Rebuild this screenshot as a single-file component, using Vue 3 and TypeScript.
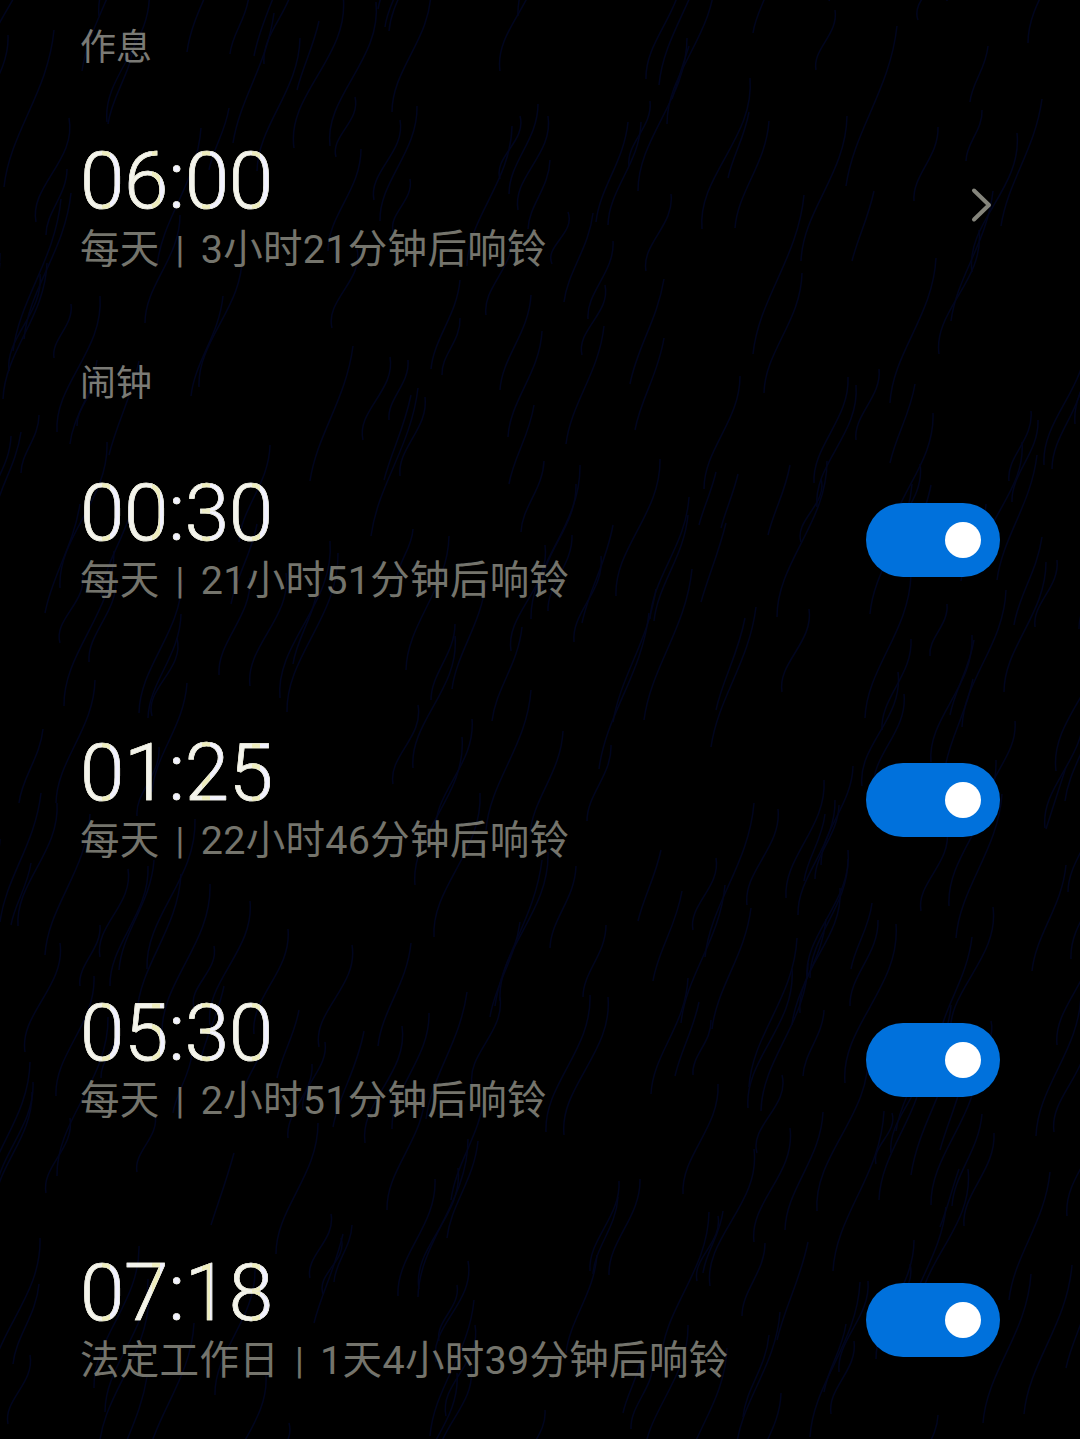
<script setup lang="ts">
interface Alarm { time: string; repeat: string; remain: string }

const alarms: Alarm[] = [
  { time: '00:30', repeat: '每天', remain: '21小时51分钟后响铃' },
  { time: '01:25', repeat: '每天', remain: '22小时46分钟后响铃' },
  { time: '05:30', repeat: '每天', remain: '2小时51分钟后响铃' },
  { time: '07:18', repeat: '法定工作日', remain: '1天4小时39分钟后响铃' },
]

let seed = 23
const rnd = (): number => {
  seed = (seed * 16807) % 2147483647
  return seed / 2147483647
}
const streaks: string[] = Array.from({ length: 420 }, () => {
  const x = rnd() * 1300 - 100
  const y = rnd() * 1500
  const len = 50 + rnd() * 110
  const dx = len * 0.32
  const w = (rnd() - 0.5) * 16
  return `M${x.toFixed(0)} ${y.toFixed(0)}c${w.toFixed(0)} ${(-len * 0.35).toFixed(0)} ${(dx - w).toFixed(0)} ${(-len * 0.6).toFixed(0)} ${dx.toFixed(0)} ${(-len).toFixed(0)}`
})
</script>

<template>
  <main class="page">
    <svg class="streaks" viewBox="0 0 1080 1439" aria-hidden="true">
      <path v-for="(d, i) in streaks" :key="i" :d="d" />
    </svg>

    <h2 class="label">作息</h2>
    <section class="row bedtime">
      <div class="text">
        <div class="time">06:00</div>
        <div class="sub"><span>每天</span><i class="sep">|</i><span>3小时21分钟后响铃</span></div>
      </div>
      <svg class="chevron" width="24" height="36" viewBox="0 0 24 36" aria-hidden="true">
        <path d="M4 3.5 L19 18 L4 32.5" />
      </svg>
    </section>

    <h2 class="label">闹钟</h2>
    <section v-for="a in alarms" :key="a.time" class="row">
      <div class="text">
        <div class="time">{{ a.time }}</div>
        <div class="sub"><span>{{ a.repeat }}</span><i class="sep">|</i><span>{{ a.remain }}</span></div>
      </div>
      <div class="toggle"><span class="knob"></span></div>
    </section>
  </main>
</template>

<style scoped>
.page {
  position: relative;
  width: 1080px;
  height: 1439px;
  overflow: hidden;
  background: #000;
  padding: 0 80px;
  box-sizing: border-box;
  font-family: Roboto, "Noto Sans CJK SC", sans-serif;
}
.streaks {
  position: absolute;
  inset: 0;
  width: 1080px;
  height: 1439px;
}
.streaks path {
  fill: none;
  stroke: #00051e;
  stroke-width: 1.5;
}
.label {
  position: relative;
  margin: 0;
  padding-top: 19px;
  font-size: 36px;
  line-height: 58px;
  height: 55px;
  font-weight: 400;
  color: #7a7a75;
}
.row {
  position: relative;
  height: 260px;
  display: flex;
  align-items: center;
  justify-content: space-between;
}
.row > .text {
  margin-top: -2px;
}
.row.bedtime {
  height: 262px;
  padding-right: 6px;
}
.row.bedtime > .text {
  padding-top: 5px;
  margin-top: 0;
}
.row.bedtime .time {
  line-height: 84px;
  height: 84px;
}
.text {
  display: flex;
  flex-direction: column;
}
.time {
  font-size: 80px;
  font-weight: 300;
  line-height: 82px;
  height: 82px;
  letter-spacing: -0.3px;
  color: transparent;
  -webkit-text-stroke: 0.7px #eeeedd;
  background: repeating-linear-gradient(90deg, #f4f4ec 0 22px, #efeebc 22px 30px, #f2f2ff 30px 50px);
  -webkit-background-clip: text;
  background-clip: text;
  width: max-content;
}
.sub {
  display: flex;
  align-items: center;
  margin-top: 1px;
  font-size: 39.5px;
  line-height: 52px;
  font-weight: 400;
  letter-spacing: 0.3px;
  color: #74746c;
}
.sep {
  font-style: normal;
  font-size: 36px;
  margin: 0 16px;
}
.chevron path {
  fill: none;
  stroke: #85857c;
  stroke-width: 4;
  stroke-linecap: round;
  stroke-linejoin: round;
}
.toggle {
  width: 134px;
  height: 74px;
  border-radius: 37px;
  background: #0071dc;
  display: flex;
  align-items: center;
  justify-content: flex-end;
  padding-right: 19px;
  box-sizing: border-box;
}
.knob {
  width: 36px;
  height: 36px;
  border-radius: 50%;
  background: #fff;
}
</style>
